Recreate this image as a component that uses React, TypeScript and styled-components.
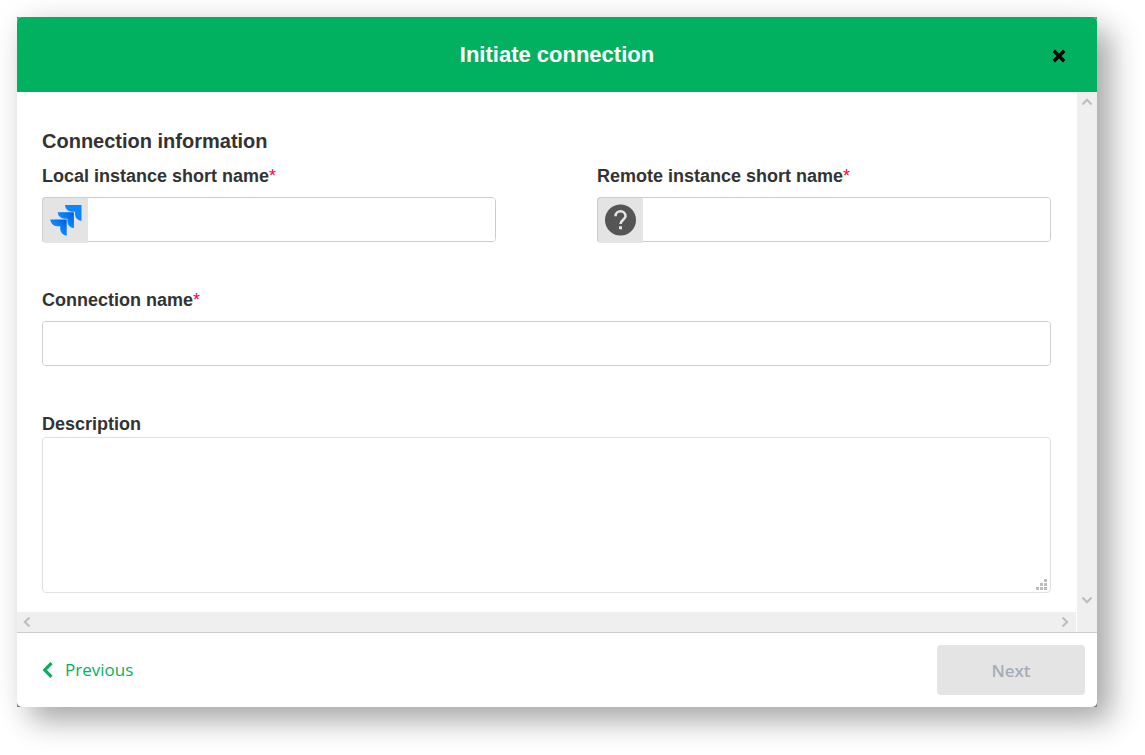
import React from "react";
import styled, { createGlobalStyle } from "styled-components";

const GlobalStyle = createGlobalStyle`
  *, *::before, *::after { box-sizing: border-box; }
  body {
    margin: 0;
    background: #fff;
    color: #333;
    font-family: "Liberation Sans", Arial, sans-serif;
  }
`;

const Page = styled.main`
  padding: 17px 48px 48px 17px;
  overflow: hidden;
`;

const Frame = styled.div`
  background: #808080;
  box-shadow: 14px 14px 28px rgba(0, 0, 0, 0.32), 0 0 32px rgba(0, 0, 0, 0.06);
`;

const Dialog = styled.form`
  display: flex;
  flex-direction: column;
  border-radius: 5px;
  overflow: hidden;
  background: #fff;
`;

const Header = styled.header`
  display: grid;
  grid-template-columns: 48px 1fr 48px;
  align-items: center;
  padding: 0 14px;
  height: 75px;
  background: #02b15f;
`;

const Title = styled.h1`
  grid-column: 2;
  margin: 0;
  color: #fff;
  font-size: 22px;
  line-height: 24px;
  text-align: center;
`;

const CloseButton = styled.button`
  display: flex;
  align-items: center;
  justify-content: center;
  height: 40px;
  padding: 2px 1px 0 0;
  border: 0;
  background: none;
  cursor: pointer;
`;

const ScrollArea = styled.div`
  display: grid;
  grid-template-columns: 1fr 20px;
  grid-template-rows: 1fr 20px;
`;

const Content = styled.section`
  padding: 37px 26px 19px 25px;
`;

const VerticalBar = styled.div`
  grid-row: 1 / 3;
  grid-column: 2;
  display: flex;
  flex-direction: column;
  justify-content: space-between;
  align-items: center;
  padding: 6px 1px 28px 0;
  background: #efefef;
`;

const HorizontalBar = styled.div`
  display: flex;
  justify-content: space-between;
  align-items: center;
  margin-right: 1px;
  padding: 0 7px 1px 6px;
  background: #efefef;
`;

const Heading = styled.h2`
  margin: 0 0 13px;
  font-size: 20px;
  line-height: 24px;
`;

const Columns = styled.div`
  display: grid;
  grid-template-columns: 1fr 1fr;
  column-gap: 101px;
`;

const Field = styled.div<{ $last?: boolean }>`
  display: flex;
  flex-direction: column;
  gap: ${(p) => (p.$last ? 3 : 11)}px;
  margin-bottom: ${(p) => (p.$last ? 0 : 48)}px;
`;

const Label = styled.label`
  font-size: 18px;
  font-weight: bold;
  line-height: 20px;
`;

const Required = styled.span`
  color: #ff0038;
  font-weight: normal;
`;

const InputBox = styled.div`
  display: flex;
  height: 45px;
  border: 1px solid #ccc;
  border-radius: 4px;
`;

const Addon = styled.span`
  display: flex;
  align-items: center;
  justify-content: flex-end;
  width: 46px;
  height: 46px;
  margin: -1px 0 0 -1px;
  padding-right: 5px;
  border: 1px solid #ccc;
  border-color: #ccc #e4e4e4 #e4e4e4 #ccc;
  border-radius: 4px 0 0 4px;
  background: #e4e4e4;
`;

const Input = styled.input`
  flex: 1;
  min-width: 0;
  padding: 0 12px;
  border: 0;
  border-radius: 3px;
  outline: 0;
  background: #fff;
  font: inherit;
  font-size: 18px;
`;

const AreaBox = styled.div`
  position: relative;
  display: flex;
`;

const TextArea = styled.textarea`
  flex: 1;
  height: 156px;
  padding: 12px;
  border: 1px solid #e1e1e1;
  border-radius: 4px;
  outline: 0;
  resize: none;
  font: inherit;
  font-size: 18px;
`;

const Grip = styled.svg`
  position: absolute;
  right: 4px;
  bottom: 3px;
`;

const Footer = styled.footer`
  display: flex;
  justify-content: space-between;
  align-items: center;
  padding: 12px 12px 12px 25px;
  border-top: 1px solid #ccc;
`;

const PreviousButton = styled.button`
  display: flex;
  align-items: center;
  gap: 11px;
  padding: 0;
  border: 0;
  background: none;
  color: #02b15f;
  font-family: "Open Sans", "Noto Sans", sans-serif;
  font-size: 17px;
  line-height: 24px;
  cursor: pointer;
`;

const NextButton = styled.button`
  width: 148px;
  height: 50px;
  padding: 0;
  border: 0;
  border-radius: 4px;
  background: #e4e4e4;
  color: #a5adba;
  font-family: "Open Sans", "Noto Sans", sans-serif;
  font-size: 17px;
  font-weight: 600;
`;

function Arrow({ d, w, h }: { d: string; w: number; h: number }) {
  return (
    <svg width={w} height={h} viewBox={`0 0 ${w} ${h}`} fill="none" stroke="#bdbdbd" strokeWidth="2" aria-hidden="true">
      <path d={d} />
    </svg>
  );
}

function JiraIcon() {
  return (
    <svg width="32" height="32" viewBox="0 0 32 32" aria-hidden="true">
      <defs>
        <linearGradient id="shade" x1="1" y1="0.1" x2="0.5" y2="0.6">
          <stop offset="0.1" stopColor="#0062e2" />
          <stop offset="0.9" stopColor="#0a86ff" />
        </linearGradient>
      </defs>
      <path fill="#0a86ff" d="M15 1h16.500v16a7 7 0 0 1-6.500-7V7.700h-3.200A7 7 0 0 1 15 1z" />
      <path fill="url(#shade)" d="M7.700 8.200h16.200v16a7 7 0 0 1-6.500-7v-2.400h-3A7 7 0 0 1 7.700 8.200z" />
      <path fill="url(#shade)" d="M0.300 15.500h16.400v16.200a7 7 0 0 1-6.500-7v-2.500H7.100a7 7 0 0 1-6.800-6.700z" />
    </svg>
  );
}

function QuestionIcon() {
  return (
    <svg width="32" height="32" viewBox="0 0 32 32" aria-hidden="true">
      <circle cx="15.500" cy="16" r="15.500" fill="#555" />
      <path d="M10.500 12.300a5 5 0 0 1 10 0c0 3.300-5 3.700-5 7.700" fill="none" stroke="#e4e4e4" strokeWidth="2.600" />
      <path fill="#e4e4e4" d="M14 22.200h3v3h-3z" />
    </svg>
  );
}

function GripIcon() {
  return (
    <Grip width="11" height="11" viewBox="0 0 11 11" fill="#bdbdbd" aria-hidden="true">
      <path d="M8 0h3v3H8zM4 4h3v3H4zM8 4h3v3H8zM0 8h3v3H0zM4 8h3v3H4zM8 8h3v3H8z" />
    </Grip>
  );
}

export default function App() {
  return (
    <>
      <GlobalStyle />
      <Page>
        <Frame>
          <Dialog onSubmit={(e) => e.preventDefault()}>
            <Header>
              <Title>Initiate connection</Title>
              <CloseButton type="button" aria-label="Close">
                <svg width="14" height="14" viewBox="0 0 14 14" fill="none" stroke="#000" strokeWidth="3.400" aria-hidden="true">
                  <path d="M1.800 1.800l10.400 10.400M12.200 1.800L1.800 12.200" />
                </svg>
              </CloseButton>
            </Header>
            <ScrollArea>
              <Content>
                <Heading>Connection information</Heading>
                <Columns>
                  <Field>
                    <Label htmlFor="local">Local instance short name<Required>*</Required></Label>
                    <InputBox>
                      <Addon><JiraIcon /></Addon>
                      <Input id="local" type="text" />
                    </InputBox>
                  </Field>
                  <Field>
                    <Label htmlFor="remote">Remote instance short name<Required>*</Required></Label>
                    <InputBox>
                      <Addon><QuestionIcon /></Addon>
                      <Input id="remote" type="text" />
                    </InputBox>
                  </Field>
                </Columns>
                <Field>
                  <Label htmlFor="name">Connection name<Required>*</Required></Label>
                  <InputBox>
                    <Input id="name" type="text" />
                  </InputBox>
                </Field>
                <Field $last>
                  <Label htmlFor="description">Description</Label>
                  <AreaBox>
                    <TextArea id="description" />
                    <GripIcon />
                  </AreaBox>
                </Field>
              </Content>
              <VerticalBar>
                <Arrow w={10} h={8} d="M0.500 6.500L5 1.800l4.500 4.700" />
                <Arrow w={10} h={8} d="M0.500 1.500L5 6.200l4.500-4.700" />
              </VerticalBar>
              <HorizontalBar>
                <Arrow w={8} h={10} d="M6.500 0.500L1.800 5l4.700 4.500" />
                <Arrow w={8} h={10} d="M1.500 0.500L6.200 5 1.500 9.500" />
              </HorizontalBar>
            </ScrollArea>
            <Footer>
              <PreviousButton type="button">
                <svg width="12" height="16" viewBox="0 0 12 16" fill="none" stroke="#02b15f" strokeWidth="3.200" aria-hidden="true">
                  <path d="M9.500 1.200L2.800 8l6.700 6.800" />
                </svg>
                Previous
              </PreviousButton>
              <NextButton type="submit" disabled>Next</NextButton>
            </Footer>
          </Dialog>
        </Frame>
      </Page>
    </>
  );
}
